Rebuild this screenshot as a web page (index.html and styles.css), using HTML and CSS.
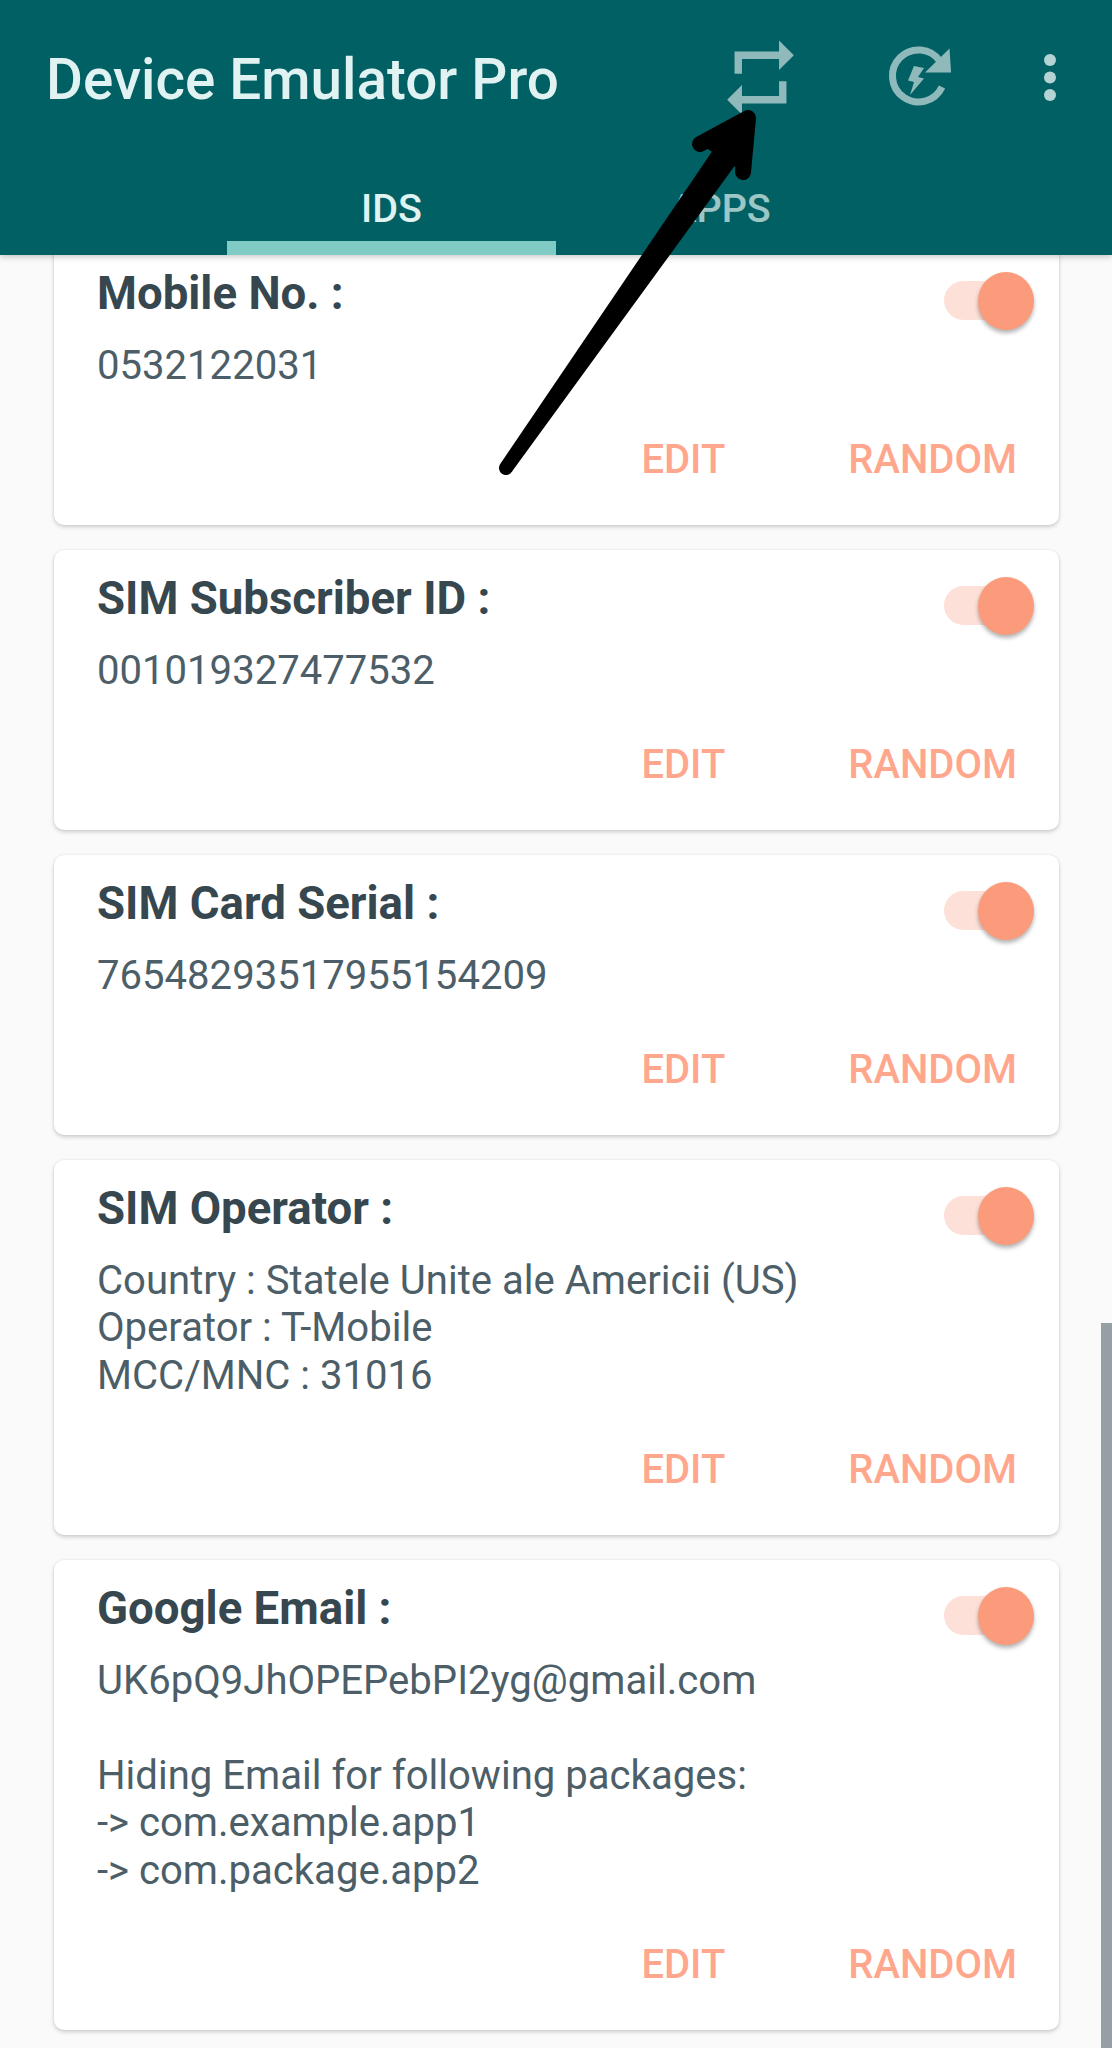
FILE: index.html
```html
<!DOCTYPE html>
<html lang="en">
<head>
<meta charset="utf-8">
<title>Device Emulator Pro</title>
<link rel="stylesheet" href="styles.css">
</head>
<body>
<div class="app">
  <header class="appbar">
    <div class="toolbar">
      <h1 class="app-title">Device Emulator Pro</h1>
      <svg class="icon icon-repeat" viewBox="0 0 24 24"><path d="M7 7h10v3l4-4-4-4v3H5v6h2V7zm10 10H7v-3l-4 4 4 4v-3h12v-6h-2v4z"/></svg>
      <svg class="icon icon-refresh" viewBox="0 0 80 75"><path class="ring" d="M59.800 21.100A26 26 0 1 0 62 47"/><path d="M69.500 8.500L71 32.500H45z"/><path d="M34 26L44 28L38 37L44 38.500L30 55L34 42L28 40.500z"/></svg>
      <svg class="icon icon-more" viewBox="0 0 14 48"><circle cx="7" cy="6" r="6"/><circle cx="7" cy="23.500" r="6"/><circle cx="7" cy="41" r="6"/></svg>
    </div>
    <nav class="tabs">
      <div class="tab tab-active">IDS</div>
      <div class="tab">APPS</div>
    </nav>
  </header>
  <main class="list">
    <section class="card">
      <div class="card-head"><h2 class="card-title">Mobile No. :</h2><span class="toggle"><span class="thumb"></span></span></div>
      <p class="card-value">0532122031</p>
      <div class="actions"><span class="action">EDIT</span><span class="action">RANDOM</span></div>
    </section>
    <section class="card">
      <div class="card-head"><h2 class="card-title">SIM Subscriber ID :</h2><span class="toggle"><span class="thumb"></span></span></div>
      <p class="card-value">001019327477532</p>
      <div class="actions"><span class="action">EDIT</span><span class="action">RANDOM</span></div>
    </section>
    <section class="card">
      <div class="card-head"><h2 class="card-title">SIM Card Serial :</h2><span class="toggle"><span class="thumb"></span></span></div>
      <p class="card-value">76548293517955154209</p>
      <div class="actions"><span class="action">EDIT</span><span class="action">RANDOM</span></div>
    </section>
    <section class="card">
      <div class="card-head"><h2 class="card-title">SIM Operator :</h2><span class="toggle"><span class="thumb"></span></span></div>
      <p class="card-value">Country : Statele Unite ale Americii (US)<br>Operator : T-Mobile<br>MCC/MNC : 31016</p>
      <div class="actions"><span class="action">EDIT</span><span class="action">RANDOM</span></div>
    </section>
    <section class="card">
      <div class="card-head"><h2 class="card-title">Google Email :</h2><span class="toggle"><span class="thumb"></span></span></div>
      <p class="card-value">UK6pQ9JhOPEPebPI2yg@gmail.com<br><br>Hiding Email for following packages:<br>-&gt; com.example.app1<br>-&gt; com.package.app2</p>
      <div class="actions"><span class="action">EDIT</span><span class="action">RANDOM</span></div>
    </section>
  </main>
  <div class="scrollbar"></div>
  <svg class="pointer" viewBox="0 0 1112 2048"><path class="pointer-shaft" d="M506 468L731 136L742 144Z"/><path class="pointer-head" d="M700 144L748 118L743 172"/></svg>
</div>
</body>
</html>
```
FILE: styles.css
```css
* { box-sizing: border-box; }
html, body { margin: 0; padding: 0; }
body { background: #fafafa; font-family: Roboto, "Liberation Sans", sans-serif; }
.app { position: relative; width: 1112px; height: 2048px; overflow: hidden; background: #fafafa; }

.appbar { position: relative; z-index: 2; height: 255px; background: #006064; box-shadow: 0 2px 6px rgba(0,0,0,.22); }
.toolbar { display: flex; align-items: flex-start; height: 173px; padding-left: 46px; }
.app-title { width: 670px; flex: none; margin: 50px 0 0; font-size: 56.600px; line-height: 60px; font-weight: 500; color: #e0f2f1; }
.icon { display: block; flex: none; }
.icon-repeat { width: 89px; height: 89px; margin-top: 33px; fill: #8fb9bb; }
.icon-refresh { width: 80px; height: 75px; margin: 40px 0 0 75px; fill: #8fb9bb; }
.icon-refresh .ring { fill: none; stroke: #8fb9bb; stroke-width: 7; }
.icon-more { width: 14px; height: 48px; margin: 54px 0 0 83px; fill: #b4d3d4; }

.tabs { display: flex; height: 82px; padding-left: 227px; }
.tab { width: 329px; height: 82px; padding-top: 11px; text-align: center; font-size: 39.500px; line-height: 50px; font-weight: 500; color: #e0f2f1; opacity: .7; }
.tab-active { opacity: 1; border-bottom: 14px solid #80cbc4; }

.list { display: flex; flex-direction: column; gap: 25px; margin-top: -10px; padding: 0 53px 0 54px; }
.card { background: #fff; border-radius: 10px; padding: 25.500px 25px 40.500px 43px; box-shadow: 0 2px 4px rgba(0,0,0,.18), 0 0 2px rgba(0,0,0,.08); }
.card-head { display: flex; justify-content: space-between; align-items: flex-start; height: 46px; }
.card-title { margin: 0; font-size: 45.600px; line-height: 46px; font-weight: 700; color: #37474f; }
.toggle { position: relative; display: block; width: 90px; height: 39px; margin-top: 10.500px; border-radius: 20px; background: #fde0d7; }
.thumb { position: absolute; top: -9px; right: 0; width: 56px; height: 58px; border-radius: 50%; background: #fb9b7c; box-shadow: 0 3px 4px rgba(0,0,0,.3); }
.card-value { margin: 25px 0 0; font-size: 40.100px; line-height: 47.500px; font-weight: 400; color: #4c5e67; }
.actions { display: flex; justify-content: flex-end; gap: 123px; margin-top: 45.500px; padding-right: 17px; }
.action { font-size: 40px; line-height: 50px; font-weight: 500; color: #ffa78d; }

.scrollbar { position: absolute; z-index: 1; top: 1323px; right: 0; bottom: 0; width: 11px; background: #969fa3; }
.pointer { position: absolute; z-index: 3; inset: 0; width: 1112px; height: 2048px; }
.pointer-shaft { fill: #000; stroke: #000; stroke-width: 14; stroke-linejoin: round; }
.pointer-head { fill: #000; stroke: #000; stroke-width: 16; stroke-linejoin: round; stroke-linecap: round; }
```
